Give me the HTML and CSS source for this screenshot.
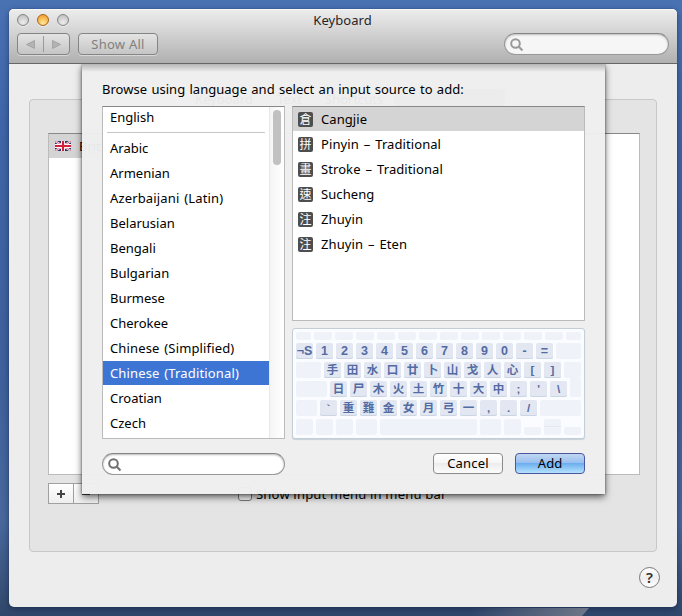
FILE: index.html
```html
<!DOCTYPE html>
<html lang="en">
<head>
<meta charset="utf-8">
<title>Keyboard</title>
<link rel="stylesheet" href="styles.css">
</head>
<body>
<main class="window">
  <header class="toolbar">
    <div class="titlebar">
      <div class="lights"><i></i><i class="amber"></i><i></i></div>
      <h1>Keyboard</h1>
    </div>
    <div class="tools">
      <div class="nav">
        <svg width="51" height="20" viewBox="0 0 51 20"><path d="M8.5 10.5l8-4v8z M42.5 10.5l-8-4v8z" fill="#b3b3b3" stroke="#999" stroke-width=".7"/><path d="M25.5 2v16" stroke="#999"/></svg>
      </div>
      <button class="showall">Show All</button>
      <div class="search top-search"><svg width="14" height="14" viewBox="0 0 14 14"><circle cx="5.5" cy="5.5" r="4.3"/><path d="M8.8 8.8l3.7 3.7"/></svg></div>
    </div>
  </header>
  <section class="content">
    <nav class="tabs"><span class="t1">Keyboard</span><span class="t2">Text</span><span class="t3">Shortcuts</span><span class="t4">Input Sources</span></nav>
    <div class="group">
      <div class="sources">
        <div class="source">
          <svg width="16" height="10" viewBox="0 0 16 10"><path fill="#29346f" d="M0 0h16v10H0z"/><path d="M0 0l16 10M16 0L0 10" stroke="#fff" stroke-width="2"/><path d="M0 0l16 10M16 0L0 10" stroke="#d5273e" stroke-width=".7"/><path d="M8 0v10M0 5h16" stroke="#fff" stroke-width="4"/><path d="M8 0v10M0 5h16" stroke="#d5203c" stroke-width="2.2"/></svg>
          <span>British</span>
        </div>
      </div>
      <div class="under">
        <div class="plusminus"><span><svg width="8" height="8"><path d="M4 0v8M0 4h8" stroke="#444" stroke-width="2"/></svg></span><span><svg width="8" height="8"><path d="M0 4h8" stroke="#444" stroke-width="2"/></svg></span></div>
        <i class="check"></i><span class="show">Show input menu in menu bar</span>
      </div>
    </div>
    <div class="help">?</div>
  </section>
  <section class="sheet">
    <p class="prompt">Browse using language and select an input source to add:</p>
    <div class="panes">
      <div class="langs">
        <ul>
          <li class="first">English</li>
          <li>Arabic</li><li>Armenian</li><li class="wide">Azerbaijani (Latin)</li><li>Belarusian</li><li>Bengali</li><li>Bulgarian</li><li>Burmese</li><li>Cherokee</li><li class="wide">Chinese (Simplified)</li><li class="wide on">Chinese (Traditional)</li><li>Croatian</li><li>Czech</li>
        </ul>
        <div class="track"><i></i></div>
      </div>
      <div class="right">
        <ul class="methods">
          <li class="on"><b>倉</b>Cangjie</li>
          <li><b>拼</b>Pinyin – Traditional</li>
          <li><b>畫</b>Stroke – Traditional</li>
          <li><b>速</b>Sucheng</li>
          <li><b>注</b>Zhuyin</li>
          <li><b>注</b>Zhuyin – Eten</li>
        </ul>
        <div class="keyboard">
          <div class="row fn"><i class="w15"></i><i></i><i></i><i></i><i></i><i></i><i></i><i></i><i></i><i></i><i></i><i></i><i></i><i class="w15"></i></div>
          <div class="row latin"><b>¬S</b><b>1</b><b>2</b><b>3</b><b>4</b><b>5</b><b>6</b><b>7</b><b>8</b><b>9</b><b>0</b><b>-</b><b>=</b><i class="grow"></i></div>
          <div class="row"><i class="w25"></i><b>手</b><b>田</b><b>水</b><b>口</b><b>廿</b><b>卜</b><b>山</b><b>戈</b><b>人</b><b>心</b><b>[</b><b>]</b><i class="grow"></i></div>
          <div class="row"><i class="w31"></i><b>日</b><b>尸</b><b>木</b><b>火</b><b>土</b><b>竹</b><b>十</b><b>大</b><b>中</b><b>;</b><b>'</b><b>\</b><i class="grow enter"></i></div>
          <div class="row"><i class="w21"></i><b>`</b><b>重</b><b>難</b><b>金</b><b>女</b><b>月</b><b>弓</b><b>一</b><b>,</b><b>.</b><b>/</b><i class="grow"></i></div>
          <div class="row"><i></i><i></i><i></i><i class="w21"></i><i class="w97"></i><i class="w21"></i><i></i><i class="half"></i><i class="split"></i><i class="half"></i></div>
        </div>
      </div>
    </div>
    <div class="actions">
      <div class="search"><svg width="14" height="14" viewBox="0 0 14 14"><circle cx="5.5" cy="5.5" r="4.3"/><path d="M8.8 8.8l3.7 3.7"/></svg></div>
      <button class="cancel">Cancel</button>
      <button class="add">Add</button>
    </div>
  </section>
</main>
</body>
</html>
```
FILE: styles.css
```css
* { box-sizing: border-box; }
body {
  position: relative;
  margin: 0; width: 682px; height: 616px; padding: 9px; overflow: hidden;
  font: 13px/16px "Noto Sans", "Open Sans", "Noto Sans CJK TC", sans-serif; color: #000;
  background: linear-gradient(#4972b3 0, #3f65a7 20%, #3e609b 60%, #48689c 85%, #344b70 98%, #30476c);
}
/* pale streak of the wallpaper below the window */
body::after {
  content: ""; position: absolute; left: 470px; bottom: 0; width: 119px; height: 8px;
  background: linear-gradient(90deg, transparent, #6f7888);
  clip-path: polygon(0 0, 100% 0, calc(100% - 7px) 100%, 0 100%);
}
i { font-style: normal; display: block; }
ul, h1, p { margin: 0; padding: 0; list-style: none; }
button { padding: 0; font: inherit; color: inherit; }
svg { display: block; }
.window { position: relative; width: 668px; height: 598px; border-radius: 5px; background: #ededed; box-shadow: 0 0 1px #15284a, 0 2px 6px rgba(0,10,40,.4); }
.toolbar { height: 55px; border-radius: 5px 5px 0 0; border-bottom: 1px solid #666; background: linear-gradient(#ededed, #d2d2d2 45%, #b0b0b0); box-shadow: inset 0 1px #f7f7f7; }
.titlebar { display: flex; height: 24px; padding: 5px 8px 0; }
.lights { display: flex; gap: 8px; width: 54px; }
.lights i { width: 12px; height: 12px; border-radius: 50%; border: 1px solid #858585; background: radial-gradient(circle at 50% 75%, #eee, #b7b7b7); box-shadow: 0 1px #eee; }
.lights .amber { border-color: #a4631e; background: radial-gradient(circle at 50% 80%, #ffe89b, #f3a330 80%); }
h1 { flex: 1; margin: -2px 54px 0 0; text-align: center; font-size: 13px; font-weight: 400; line-height: 16px; color: #262626; text-indent: -1px; letter-spacing: .05px; }
.tools { display: flex; padding-left: 8px; }
.nav, .showall { height: 22px; border: 1px solid #858585; border-radius: 4px; background: linear-gradient(#e3e3e3, #c5c5c5); box-shadow: 0 1px #d8d8d8; }
.nav { width: 53px; }
.showall { width: 80px; margin-left: 8px; color: #808080; letter-spacing: .25px; }
.search { height: 22px; border: 1px solid #999; border-top-color: #858585; border-radius: 11px; background: #fff; box-shadow: inset 0 1px 2px #bbb; padding: 4px 5px; }
.search svg { fill: none; stroke: #707070; stroke-width: 2; }
.top-search { width: 165px; margin-left: 346px; background: #f6f6f6; }
.top-search svg { stroke: #999; }
.content { height: 543px; padding: 35px 20px 0; }
.group { height: 453px; border: 1px solid #c8c8c8; border-radius: 4px; background: #e4e4e4; padding: 33px 16px 0 18px; }
.tabs { display: flex; height: 21px; width: 322px; margin: -10px 0 -11px 154px; position: relative; background: #e9e9e9; border-radius: 4px; line-height: 20px; }
.tabs .t1 { width: 83px; padding-left: 12px; }
.tabs .t2 { width: 48px; padding-left: 11px; }
.tabs .t3 { width: 80px; padding-left: 11px; }
.tabs .t4 { width: 111px; text-align: center; color: #aaa; background: #999; border-radius: 0 4px 4px 0; }
.sources { width: 592px; height: 342px; border: 1px solid #bbb; border-top-color: #888; background: #fff; }
.source { display: flex; align-items: center; gap: 8px; width: 190px; height: 24px; padding-left: 6px; background: #d4d4d4; }
.under { display: flex; height: 21px; margin-top: 8px; }
.plusminus { display: flex; width: 51px; border: 1px solid #a0a0a0; background: linear-gradient(#fff, #eee); }
.plusminus span { flex: 1; display: flex; align-items: center; justify-content: center; }
.plusminus span + span { border-left: 1px solid #a0a0a0; }
.check { width: 14px; height: 14px; border: 1px solid #777; border-radius: 3px; background: #f4f4f4; margin: 4px 4px 0 139px; }
.show { line-height: 23px; letter-spacing: .2px; }
.help { width: 21px; height: 21px; margin: 15px -3px 0 auto; border: 1px solid #777; border-radius: 50%; background: linear-gradient(#fff, #eee 50%, #fff); font: 600 15px/18px "Noto Sans", sans-serif; text-align: center; color: #333; }
.sheet { position: absolute; left: 73px; top: 55px; width: 523px; height: 430px; padding: 17px 20px 0; background: linear-gradient(rgba(0,0,0,.24), transparent 8px), rgba(238,238,238,.97); box-shadow: 0 3px 7px rgba(0,0,0,.6), 0 0 2px rgba(0,0,0,.5); clip-path: inset(0 -14px -18px -14px); }
.prompt { height: 25px; white-space: nowrap; letter-spacing: .03px; word-spacing: .85px; }
.panes { display: flex; gap: 7px; height: 333px; }
.langs { display: flex; width: 183px; border: 1px solid #bbb; border-top-color: #888; background: #fff; overflow: hidden; }
.langs ul { width: 166px; }
.langs li { height: 25px; line-height: 24px; padding-left: 7px; white-space: nowrap; }
.langs .wide { letter-spacing: .15px; word-spacing: 1.2px; }
.langs .first { height: 26px; margin: 0 4px 3px; padding-left: 3px; line-height: 21px; border-bottom: 1px solid #c6c6c6; }
.langs .on { color: #fff; background: #3d75d5; height: 24px; margin-bottom: 1px; }
.track { width: 15px; padding: 3px; border-left: 1px solid #e8e8e8; background: linear-gradient(90deg, #f5f5f5, #fff); }
.track i { width: 8px; height: 55px; border-radius: 4px; background: #c1c1c1; }
.right { width: 293px; }
.methods { height: 215px; border: 1px solid #bbb; border-top-color: #888; background: #fff; }
.methods li { display: flex; align-items: center; height: 25px; padding: 0 0 1px 5px; letter-spacing: .08px; word-spacing: 1.5px; }
.methods .on { height: 24px; margin-bottom: 1px; padding-bottom: 0; background: #d4d4d4; }
.methods b { width: 15px; height: 15px; margin-right: 8px; border-radius: 2px; background: #4e4e4e; color: #fff; font: 400 12px/14px "Noto Sans CJK TC", sans-serif; text-align: center; letter-spacing: 0; }
.keyboard { display: flex; flex-direction: column; gap: 3px; height: 111px; margin-top: 7px; padding: 3px; border: 1px solid #c3ced6; border-radius: 3px; background: #fbfcff; box-shadow: 0 1px 1px #c6d0d8; }
.row { display: flex; gap: 3px; height: 16px; }
.row i { width: 17px; height: 16px; border-radius: 2px; background: #eff2f8; }
.row b { width: 17px; height: 16px; border-radius: 2px; background: #e2e7f1; box-shadow: inset 0 -1px #cbd5e3; color: #536ba3; font: 600 11.5px/16px "Liberation Sans", "Noto Sans CJK TC", sans-serif; white-space: nowrap; display: flex; justify-content: center; }
.latin b { font-size: 12.5px; line-height: 16px; }
.row.fn, .row.fn i { height: 8px; }
.row.fn i { width: 18px; }
.row .w15, .row.fn .w15 { width: 15px; }
.row .w21 { width: 21px; }
.row .w25 { width: 25px; }
.row .w31 { width: 31px; }
.row .w97 { width: 97px; }
.row .grow { flex: 1; }
.row .enter { height: 19px; margin-top: -3px; border-top-left-radius: 0; }
.row .half { height: 8px; margin-top: 8px; }
.row .split { background: linear-gradient(#eff2f8 7px, #e4e9f1 7px, #e4e9f1 8px, #eff2f8 8px); }
.actions { display: flex; height: 22px; margin-top: 14px; }
.actions .search { width: 183px; }
.actions button { width: 70px; height: 21px; border-radius: 4px; line-height: 17px; }
.actions .cancel { margin-left: 148px; border: 1px solid #8b8b8b; background: linear-gradient(#fff, #f5f5f5 50%, #ececec 50%, #fcfcfc); letter-spacing: .2px; }
.actions .add { margin-left: 12px; border: 1px solid #4b569f; background: linear-gradient(#c1d7f2, #94bdef 50%, #6caeef 50%, #b4e2fd); }
```
